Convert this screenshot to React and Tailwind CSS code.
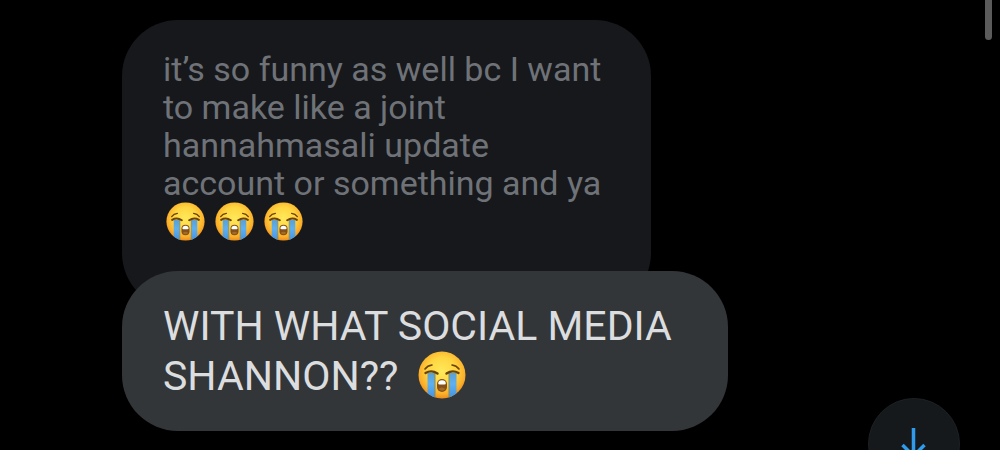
import React from "react";

const CryingFace = ({ className }) => (
  <svg viewBox="0 0 48 48" className={className} role="img" aria-label="loudly crying face">
    <defs>
      <radialGradient id="face" cx="50%" cy="42%" r="60%">
        <stop offset="0" stopColor="#ffe95a" />
        <stop offset="0.5" stopColor="#ffd541" />
        <stop offset="0.8" stopColor="#fbb02a" />
        <stop offset="1" stopColor="#e8861a" />
      </radialGradient>
      <linearGradient id="tear" x1="0" y1="0" x2="0" y2="1">
        <stop offset="0" stopColor="#5c9fd0" />
        <stop offset="0.4" stopColor="#5fb0f0" />
        <stop offset="1" stopColor="#3f8fdc" />
      </linearGradient>
      <clipPath id="head">
        <circle cx="24" cy="24" r="23.5" />
      </clipPath>
    </defs>
    <circle cx="24" cy="24" r="23.5" fill="url(#face)" />
    <g clipPath="url(#head)">
      <path d="M9.5 22h7.5v27H9.5z" fill="url(#tear)" />
      <path d="M31 22h7.5v27H31z" fill="url(#tear)" />
      <path d="M17 22v25M31 22v25" stroke="#8b8a5c" strokeWidth="1" />
    </g>
    <g fill="none" stroke="#6b4309" strokeLinecap="round">
      <path d="M7 18q2.5-3.500 7-4" strokeWidth="1.6" />
      <path d="M41 18q-2.5-3.500-7-4" strokeWidth="1.6" />
      <path d="M8 21.500q5.500 2 11 0" strokeWidth="0" />
      <path d="M7.5 22q6-3.500 12 .5" strokeWidth="2.4" />
      <path d="M40.5 22q-6-3.500-12 .5" strokeWidth="2.4" />
    </g>
    <rect x="19" y="28" width="10" height="13" rx="5" fill="#84501a" />
    <path d="M20.2 32.500q0-3.200 3.800-3.200t3.800 3.200q0 1-1.300 1h-5q-1.300 0-1.300-1z" fill="#fff" />
    <path d="M20.500 38q3.500-3 7 0-3.500 3.500-7 0z" fill="#a66a28" />
  </svg>
);

const App = () => {
  return (
    <div className="relative min-h-screen overflow-hidden bg-black pt-5 pl-[122px] font-['Roboto',sans-serif]">

      {/* QUOTED MESSAGE */}
      <div className="w-fit max-w-[529px] rounded-[56px] bg-[#17181c] px-[41px] pt-[30px] pb-[68px] text-[#6f7378]">
        <p className="text-[34px] leading-[38px]">
          it’s so funny as well bc I want to make like a joint hannahmasali
          update account or something and ya
        </p>
        <div className="flex gap-[10px] pl-[3px]">
          <CryingFace className="size-[39px]" />
          <CryingFace className="size-[39px]" />
          <CryingFace className="size-[39px]" />
        </div>
      </div>

      {/* REPLY */}
      <div className="relative -mt-[38px] w-fit max-w-[606px] rounded-[56px] bg-[#333639] px-[41px] py-[30px] text-[#dcdddf]">
        <p className="text-[41px] leading-[50px]">
          WITH WHAT SOCIAL MEDIA SHANNON??
          <CryingFace className="ml-5 inline-block size-12 align-[-9px]" />
        </p>
      </div>

      {/* SCROLLBAR */}
      <div className="absolute top-0 right-2 h-10 w-[7px] rounded-b-full bg-[#5b5b5b]" />

      {/* JUMP TO LATEST */}
      <button
        type="button"
        aria-label="Scroll to latest"
        className="absolute right-10 -bottom-10 flex size-[92px] items-center justify-center rounded-full border border-[#1d2124] bg-[#16191c] text-[#2f9bea]"
      >
        <svg viewBox="0 0 34 34" className="size-[34px]" fill="none" stroke="currentColor" strokeWidth="3.5">
          <path d="M16.500 1v30M5.500 18L16.500 29l11-11" />
        </svg>
      </button>
    </div>
  );
};

export default App;
